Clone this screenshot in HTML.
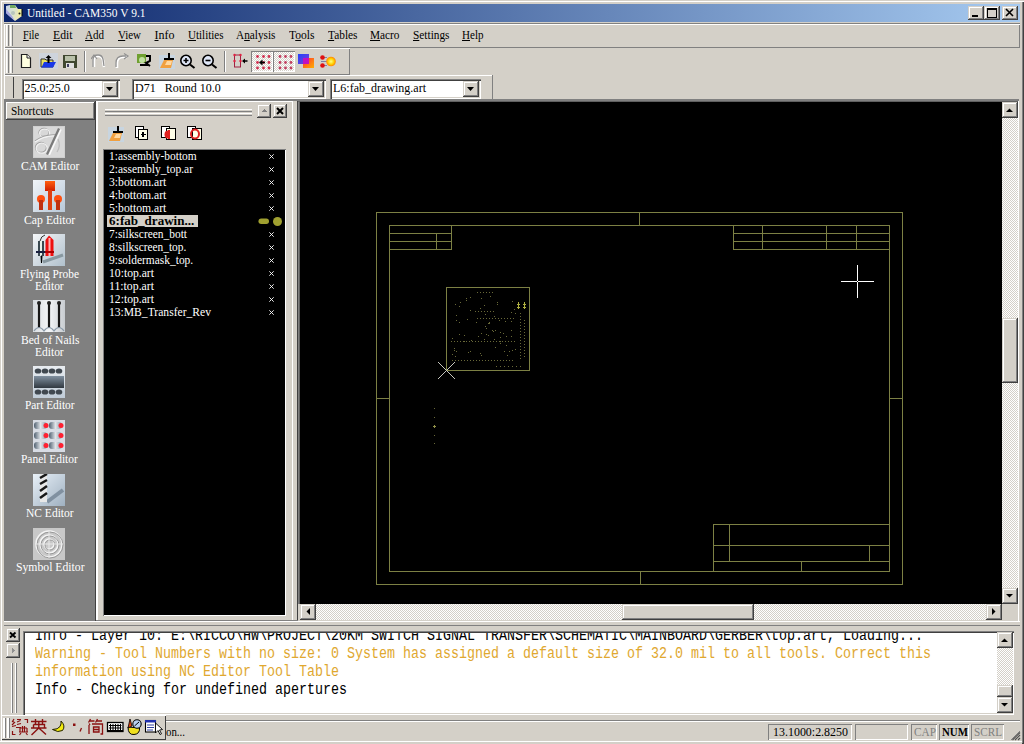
<!DOCTYPE html>
<html><head><meta charset="utf-8">
<style>
*{margin:0;padding:0;box-sizing:border-box}
html,body{width:1024px;height:744px;overflow:hidden;background:#d4d0c8;font-family:"Liberation Serif",serif;font-size:12px;color:#000;position:relative}
.a{position:absolute}
.t{position:absolute;white-space:nowrap;line-height:1}
.chk{background-color:#d4d0c8;background-image:linear-gradient(45deg,#fff 25%,transparent 25%,transparent 75%,#fff 75%),linear-gradient(45deg,#fff 25%,transparent 25%,transparent 75%,#fff 75%);background-size:2px 2px;background-position:0 0,1px 1px}
</style></head><body>

<div class="a" style="left:0px;top:0px;width:1024px;height:744px;background:#d4d0c8;box-shadow:inset 1px 1px #d4d0c8,inset 2px 2px #ffffff,inset -1px -1px #404040,inset -2px -2px #808080;"></div>
<div class="a" style="left:4px;top:4px;width:1016px;height:18px;background:linear-gradient(to right,#0a246a,#a6caf0);"></div>
<svg class="a" style="left:4px;top:4px;shape-rendering:auto" width="20" height="18" viewBox="0 0 20 18" shape-rendering="crispEdges"><defs><linearGradient id="ti" x1="0" y1="0" x2="1" y2="0.3"><stop offset="0" stop-color="#c8d4e8"/><stop offset="0.5" stop-color="#d8e4d0"/><stop offset="1" stop-color="#f0e8b0"/></linearGradient></defs><polygon points="2,2 6,1 11,1 14,5 18,5 18,12 11,17 2,9" fill="url(#ti)"/><polygon points="6,1 11,1 12,4 6,4" fill="#70a860"/><polygon points="2,5 8,12 11,17 5,12 2,9" fill="#a8a8e0"/><rect x="14" y="5" width="4" height="7" fill="#f0f0a0"/><circle cx="15.5" cy="9.5" r="1" fill="#202020"/><path d="M18 5 V12" stroke="#000" stroke-width="1"/><circle cx="9" cy="9" r="2" fill="#a0b0b0" opacity="0.6"/></svg>
<div class="t" style="left:27px;top:6.95px;font-family:'Liberation Serif';font-size:12px;color:#fff;font-weight:normal;transform:scale(0.9564,1.0);transform-origin:0 0;">Untitled - CAM350 V 9.1</div>
<div class="a" style="left:968px;top:6px;width:16px;height:14px;background:#d4d0c8;box-shadow:inset -1px -1px #404040,inset 1px 1px #d4d0c8,inset -2px -2px #808080,inset 2px 2px #ffffff;"></div>
<div class="a" style="left:984px;top:6px;width:16px;height:14px;background:#d4d0c8;box-shadow:inset -1px -1px #404040,inset 1px 1px #d4d0c8,inset -2px -2px #808080,inset 2px 2px #ffffff;"></div>
<div class="a" style="left:1002px;top:6px;width:16px;height:14px;background:#d4d0c8;box-shadow:inset -1px -1px #404040,inset 1px 1px #d4d0c8,inset -2px -2px #808080,inset 2px 2px #ffffff;"></div>
<svg class="a" style="left:968px;top:6px;" width="16" height="14" viewBox="0 0 16 14" shape-rendering="crispEdges"><rect x="4" y="9" width="6" height="2" fill="#000"/></svg>
<svg class="a" style="left:984px;top:6px;" width="16" height="14" viewBox="0 0 16 14" shape-rendering="crispEdges"><rect x="3" y="2" width="9" height="9" fill="none" stroke="#000" stroke-width="1"/><rect x="3" y="2" width="9" height="2" fill="#000"/></svg>
<svg class="a" style="left:1002px;top:6px;shape-rendering:auto" width="16" height="14" viewBox="0 0 16 14" shape-rendering="crispEdges"><path d="M4 3 L11 10 M11 3 L4 10" stroke="#000" stroke-width="1.6" fill="none"/></svg>
<div class="a" style="left:4px;top:23px;width:1016px;height:1px;background:#808080;"></div>
<div class="a" style="left:4px;top:24px;width:1016px;height:24px;background:#d4d0c8;box-shadow:inset 1px 1px #ffffff,inset -1px -1px #808080;"></div>
<div class="a" style="left:6px;top:25px;width:1px;height:21px;background:#ffffff;"></div>
<div class="a" style="left:8px;top:25px;width:1px;height:21px;background:#808080;"></div>
<div class="a" style="left:7px;top:25px;width:1px;height:21px;background:#e8e6e0;"></div>
<div class="a" style="left:10px;top:25px;width:1px;height:21px;background:#ffffff;"></div>
<div class="a" style="left:12px;top:25px;width:1px;height:21px;background:#808080;"></div>
<div class="a" style="left:11px;top:25px;width:1px;height:21px;background:#e8e6e0;"></div>
<div class="t" style="left:23px;top:28.95px;font-family:'Liberation Serif';font-size:12px;color:#000;font-weight:normal;transform:scale(0.8562,1.0);transform-origin:0 0;"><span style="text-decoration:underline;text-underline-offset:1px">F</span>ile</div>
<div class="t" style="left:53px;top:28.95px;font-family:'Liberation Serif';font-size:12px;color:#000;font-weight:normal;transform:scale(0.9742,1.0);transform-origin:0 0;"><span style="text-decoration:underline;text-underline-offset:1px">E</span>dit</div>
<div class="t" style="left:85px;top:28.95px;font-family:'Liberation Serif';font-size:12px;color:#000;font-weight:normal;transform:scale(0.9191,1.0);transform-origin:0 0;"><span style="text-decoration:underline;text-underline-offset:1px">A</span>dd</div>
<div class="t" style="left:118px;top:28.95px;font-family:'Liberation Serif';font-size:12px;color:#000;font-weight:normal;transform:scale(0.9098,1.0);transform-origin:0 0;"><span style="text-decoration:underline;text-underline-offset:1px">V</span>iew</div>
<div class="t" style="left:154.5px;top:28.95px;font-family:'Liberation Serif';font-size:12px;color:#000;font-weight:normal;"><span style="text-decoration:underline;text-underline-offset:1px">I</span>nfo</div>
<div class="t" style="left:187.5px;top:28.95px;font-family:'Liberation Serif';font-size:12px;color:#000;font-weight:normal;transform:scale(0.9180,1.0);transform-origin:0 0;"><span style="text-decoration:underline;text-underline-offset:1px">U</span>tilities</div>
<div class="t" style="left:236px;top:28.95px;font-family:'Liberation Serif';font-size:12px;color:#000;font-weight:normal;transform:scale(0.9401,1.0);transform-origin:0 0;">A<span style="text-decoration:underline;text-underline-offset:1px">n</span>alysis</div>
<div class="t" style="left:288.5px;top:28.95px;font-family:'Liberation Serif';font-size:12px;color:#000;font-weight:normal;transform:scale(0.9617,1.0);transform-origin:0 0;">T<span style="text-decoration:underline;text-underline-offset:1px">o</span>ols</div>
<div class="t" style="left:327.5px;top:28.95px;font-family:'Liberation Serif';font-size:12px;color:#000;font-weight:normal;transform:scale(0.9468,1.0);transform-origin:0 0;"><span style="text-decoration:underline;text-underline-offset:1px">T</span>ables</div>
<div class="t" style="left:370px;top:28.95px;font-family:'Liberation Serif';font-size:12px;color:#000;font-weight:normal;transform:scale(0.9416,1.0);transform-origin:0 0;"><span style="text-decoration:underline;text-underline-offset:1px">M</span>acro</div>
<div class="t" style="left:412.5px;top:28.95px;font-family:'Liberation Serif';font-size:12px;color:#000;font-weight:normal;transform:scale(0.9435,1.0);transform-origin:0 0;"><span style="text-decoration:underline;text-underline-offset:1px">S</span>ettings</div>
<div class="t" style="left:461.5px;top:28.95px;font-family:'Liberation Serif';font-size:12px;color:#000;font-weight:normal;transform:scale(0.9210,1.0);transform-origin:0 0;"><span style="text-decoration:underline;text-underline-offset:1px">H</span>elp</div>
<div class="a" style="left:4px;top:48px;width:346px;height:27px;background:#d4d0c8;box-shadow:inset 1px 1px #ffffff,inset -1px -1px #808080;"></div>
<div class="a" style="left:6px;top:50px;width:1px;height:23px;background:#ffffff;"></div>
<div class="a" style="left:8px;top:50px;width:1px;height:23px;background:#808080;"></div>
<div class="a" style="left:7px;top:50px;width:1px;height:23px;background:#e8e6e0;"></div>
<div class="a" style="left:10px;top:50px;width:1px;height:23px;background:#ffffff;"></div>
<div class="a" style="left:12px;top:50px;width:1px;height:23px;background:#808080;"></div>
<div class="a" style="left:11px;top:50px;width:1px;height:23px;background:#e8e6e0;"></div>
<!--TOOLBAR-->
<svg class="a" style="left:20px;top:53px;shape-rendering:auto" width="12" height="16" viewBox="0 0 12 16" shape-rendering="crispEdges"><path d="M1.5 1.5 H7 L10.5 5 V14.5 H1.5 Z" fill="#ffffe0" stroke="#202020" stroke-width="1.2"/><path d="M7 1.5 V5 H10.5" fill="#fff" stroke="#202020" stroke-width="1"/></svg>
<svg class="a" style="left:39px;top:53px;shape-rendering:auto" width="19" height="16" viewBox="0 0 19 16" shape-rendering="crispEdges"><rect x="0" y="0" width="19" height="16" fill="#c8d8f0" opacity="0.5"/><path d="M2 6 H6 L7 7 H14 V14 H2 Z" fill="#e8e060" stroke="#303030" stroke-width="1"/><path d="M2.5 14.5 L5 9 H17 L14 14.5 Z" fill="#1838e8"/><path d="M9.5 2 L6.5 5 H8.5 V10 H10.5 V5 H12.5 Z" fill="#000"/></svg>
<svg class="a" style="left:62px;top:54px;" width="16" height="15" viewBox="0 0 16 15" shape-rendering="crispEdges"><rect x="1" y="1" width="14" height="13" fill="#404830"/><rect x="3" y="2" width="10" height="5" fill="#b8c0a8"/><rect x="4" y="9" width="8" height="5" fill="#e0e0e0"/><rect x="5" y="10" width="2" height="3" fill="#404060"/></svg>
<div class="a" style="left:84px;top:51px;width:1px;height:21px;background:#808080;"></div>
<div class="a" style="left:85px;top:51px;width:1px;height:21px;background:#ffffff;"></div>
<svg class="a" style="left:91px;top:53px;shape-rendering:auto" width="17" height="16" viewBox="0 0 17 16" shape-rendering="crispEdges"><path d="M3 14 V7 Q3 3 7 3 Q11 3 12 7 L13 14" fill="none" stroke="#fff" stroke-width="2.5"/><path d="M2 14 V7 Q2 2 7 2 Q11 2 12 6 L13 13" fill="none" stroke="#909090" stroke-width="1.3"/><path d="M0 6 L3 2 L6 6" fill="none" stroke="#909090" stroke-width="1.2"/></svg>
<svg class="a" style="left:113px;top:53px;shape-rendering:auto" width="17" height="16" viewBox="0 0 17 16" shape-rendering="crispEdges"><path d="M4 15 V10 Q4 4 10 4 H14" fill="none" stroke="#fff" stroke-width="2.5"/><path d="M3 14 V10 Q3 3 10 3 H13" fill="none" stroke="#909090" stroke-width="1.3"/><path d="M11 0.5 L15 3 L11 6" fill="none" stroke="#909090" stroke-width="1.2"/></svg>
<svg class="a" style="left:136px;top:54px;shape-rendering:auto" width="16" height="14" viewBox="0 0 16 14" shape-rendering="crispEdges"><rect x="1" y="0" width="9" height="9" fill="#70a030"/><circle cx="6" cy="6" r="3" fill="#c0e0a0"/><path d="M4 11 H12 M10 2 H14 V7 L10 9 L14 12" fill="none" stroke="#000" stroke-width="2"/></svg>
<svg class="a" style="left:159px;top:53px;shape-rendering:auto" width="16" height="16" viewBox="0 0 16 16" shape-rendering="crispEdges"><rect x="0" y="2" width="16" height="14" fill="#c0d8f0" opacity="0.6"/><rect x="9" y="0" width="2" height="6" fill="#000"/><rect x="5" y="5" width="10" height="2" fill="#000"/><path d="M5 7 H14 L12 15 H1 Z" fill="#f0a040"/><path d="M8 8 H13 L12 12 H6 Z" fill="#ffd8a0"/></svg>
<svg class="a" style="left:179px;top:53px;shape-rendering:auto" width="18" height="16" viewBox="0 0 18 16" shape-rendering="crispEdges"><circle cx="7" cy="7.5" r="5.2" fill="#e0e8f8" stroke="#000" stroke-width="1.6"/><path d="M4.5 7.5 H9.5 M7 5 V10" stroke="#000" stroke-width="1.6"/><path d="M11 11.5 L15.5 15" stroke="#000" stroke-width="2"/></svg>
<svg class="a" style="left:201px;top:53px;shape-rendering:auto" width="18" height="16" viewBox="0 0 18 16" shape-rendering="crispEdges"><circle cx="7" cy="7.5" r="5.2" fill="#e0e8f8" stroke="#000" stroke-width="1.6"/><path d="M4.5 7.5 H9.5" stroke="#000" stroke-width="1.6"/><path d="M11 11.5 L15.5 15" stroke="#000" stroke-width="2"/></svg>
<div class="a" style="left:224px;top:51px;width:1px;height:21px;background:#808080;"></div>
<div class="a" style="left:225px;top:51px;width:1px;height:21px;background:#ffffff;"></div>
<svg class="a" style="left:232px;top:53px;shape-rendering:auto" width="17" height="16" viewBox="0 0 17 16" shape-rendering="crispEdges"><rect x="2.5" y="2" width="6" height="12" fill="none" stroke="#a02040" stroke-width="1"/><circle cx="2.5" cy="2" r="1.2" fill="#e02040"/><circle cx="8.5" cy="2" r="1.2" fill="#e02040"/><circle cx="2.5" cy="8" r="1.2" fill="#e02040"/><circle cx="8.5" cy="8" r="1.2" fill="#e02040"/><path d="M10 8 L13 5.5 V10.5 Z M12 7.3 H15.5 V8.7 H12 Z" fill="#000"/></svg>
<div class="a" style="left:251px;top:51px;width:22px;height:21px;box-shadow:inset 1px 1px #808080,inset -1px -1px #ffffff;"></div>
<div class="a chk" style="left:252px;top:52px;width:20px;height:19px"></div>
<div class="a" style="left:273px;top:51px;width:22px;height:21px;box-shadow:inset 1px 1px #808080,inset -1px -1px #ffffff;"></div>
<div class="a chk" style="left:274px;top:52px;width:20px;height:19px"></div>
<svg class="a" style="left:251px;top:51px;shape-rendering:auto" width="22" height="21" viewBox="0 0 22 21" shape-rendering="crispEdges"><circle cx="6.5" cy="5.5" r="1.4" fill="#d03050"/><circle cx="6.5" cy="11.5" r="1.4" fill="#d03050"/><circle cx="6.5" cy="17" r="1.4" fill="#d03050"/><circle cx="12.5" cy="5.5" r="1.4" fill="#d03050"/><circle cx="12.5" cy="11.5" r="1.4" fill="#d03050"/><circle cx="12.5" cy="17" r="1.4" fill="#d03050"/><circle cx="18" cy="5.5" r="1.4" fill="#d03050"/><circle cx="18" cy="11.5" r="1.4" fill="#d03050"/><circle cx="18" cy="17" r="1.4" fill="#d03050"/><path d="M8 11.5 L11.5 8.5 V14.5 Z M10.5 10.7 H14 V12.3 H10.5 Z" fill="#000"/></svg>
<svg class="a" style="left:273px;top:51px;shape-rendering:auto" width="22" height="21" viewBox="0 0 22 21" shape-rendering="crispEdges"><circle cx="7" cy="5.5" r="1.4" fill="#c04060"/><circle cx="7" cy="11.5" r="1.4" fill="#c04060"/><circle cx="7" cy="17" r="1.4" fill="#c04060"/><circle cx="12.5" cy="5.5" r="1.4" fill="#c04060"/><circle cx="12.5" cy="11.5" r="1.4" fill="#c04060"/><circle cx="12.5" cy="17" r="1.4" fill="#c04060"/><circle cx="18" cy="5.5" r="1.4" fill="#c04060"/><circle cx="18" cy="11.5" r="1.4" fill="#c04060"/><circle cx="18" cy="17" r="1.4" fill="#c04060"/></svg>
<svg class="a" style="left:298px;top:54px;shape-rendering:auto" width="17" height="15" viewBox="0 0 17 15" shape-rendering="crispEdges"><defs><linearGradient id="gb" x1="0" y1="0" x2="1" y2="1"><stop offset="0" stop-color="#2040ff"/><stop offset="1" stop-color="#8040d0"/></linearGradient><linearGradient id="go" x1="0" y1="0" x2="1" y2="1"><stop offset="0" stop-color="#ff3030"/><stop offset="1" stop-color="#ffb000"/></linearGradient></defs><rect x="0" y="0" width="11" height="10" fill="url(#gb)"/><rect x="5" y="4" width="11" height="10" fill="url(#go)"/><rect x="5" y="4" width="6" height="6" fill="#c010c0"/></svg>
<svg class="a" style="left:319px;top:53px;shape-rendering:auto" width="20" height="17" viewBox="0 0 20 17" shape-rendering="crispEdges"><defs><radialGradient id="gs"><stop offset="0" stop-color="#ffff80"/><stop offset="0.6" stop-color="#ffd000"/><stop offset="1" stop-color="#ff8000"/></radialGradient></defs><path d="M3 4.5 H8 M3 12.5 H8 M2 8.5 H8" stroke="#8080a0" stroke-width="1"/><circle cx="3.5" cy="4.5" r="2.3" fill="#e01010"/><circle cx="3.5" cy="12.5" r="2.3" fill="#e01010"/><circle cx="12" cy="8.5" r="4.8" fill="url(#gs)"/></svg>
<div class="a" style="left:4px;top:75px;width:489px;height:1px;background:#ffffff;"></div>
<div class="a" style="left:492px;top:75px;width:1px;height:24px;background:#808080;"></div>
<div class="a" style="left:4px;top:75px;width:1px;height:24px;background:#ffffff;"></div>
<div class="a" style="left:13px;top:77px;width:1px;height:21px;background:#404040;"></div>
<div class="a" style="left:22px;top:79px;width:98px;height:20px;background:#fff;box-shadow:inset 1px 1px #808080,inset 2px 2px #404040,inset -1px -1px #ffffff,inset -2px -2px #d4d0c8;"></div>
<div class="a" style="left:102px;top:81px;width:16px;height:16px;background:#d4d0c8;box-shadow:inset -1px -1px #404040,inset 1px 1px #d4d0c8,inset -2px -2px #808080,inset 2px 2px #ffffff;"></div>
<svg class="a" style="left:102px;top:81px;shape-rendering:auto" width="16" height="16" viewBox="0 0 16 16" shape-rendering="crispEdges"><polygon points="4,6 11,6 7.5,10" fill="#000"/></svg>
<div class="t" style="left:24.5px;top:81.95px;font-family:'Liberation Serif';font-size:12px;color:#000;font-weight:normal;">25.0:25.0</div>
<div class="a" style="left:132px;top:79px;width:194px;height:20px;background:#fff;box-shadow:inset 1px 1px #808080,inset 2px 2px #404040,inset -1px -1px #ffffff,inset -2px -2px #d4d0c8;"></div>
<div class="a" style="left:308px;top:81px;width:16px;height:16px;background:#d4d0c8;box-shadow:inset -1px -1px #404040,inset 1px 1px #d4d0c8,inset -2px -2px #808080,inset 2px 2px #ffffff;"></div>
<svg class="a" style="left:308px;top:81px;shape-rendering:auto" width="16" height="16" viewBox="0 0 16 16" shape-rendering="crispEdges"><polygon points="4,6 11,6 7.5,10" fill="#000"/></svg>
<div class="t" style="left:135px;top:81.95px;font-family:'Liberation Serif';font-size:12px;color:#000;font-weight:normal;">D71&nbsp;&nbsp; Round 10.0</div>
<div class="a" style="left:330px;top:79px;width:151px;height:20px;background:#fff;box-shadow:inset 1px 1px #808080,inset 2px 2px #404040,inset -1px -1px #ffffff,inset -2px -2px #d4d0c8;"></div>
<div class="a" style="left:463px;top:81px;width:16px;height:16px;background:#d4d0c8;box-shadow:inset -1px -1px #404040,inset 1px 1px #d4d0c8,inset -2px -2px #808080,inset 2px 2px #ffffff;"></div>
<svg class="a" style="left:463px;top:81px;shape-rendering:auto" width="16" height="16" viewBox="0 0 16 16" shape-rendering="crispEdges"><polygon points="4,6 11,6 7.5,10" fill="#000"/></svg>
<div class="t" style="left:333px;top:81.95px;font-family:'Liberation Serif';font-size:12px;color:#000;font-weight:normal;">L6:fab_drawing.art</div>
<div class="a" style="left:4px;top:99px;width:1015px;height:2px;background:#808080;"></div>
<div class="a" style="left:4px;top:99px;width:2px;height:522px;background:#808080;"></div>
<div class="a" style="left:4px;top:101px;width:92px;height:1px;background:#808080;"></div>
<div class="a" style="left:6px;top:120px;width:89px;height:501px;background:#808080;"></div>
<div class="a" style="left:95px;top:101px;width:1px;height:520px;background:#404040;"></div>
<div class="a" style="left:6px;top:102px;width:89px;height:18px;background:#d4d0c8;box-shadow:inset -1px -1px #404040,inset 1px 1px #ffffff,inset -2px -2px #808080;"></div>
<div class="t" style="left:11px;top:104.53px;font-family:'Liberation Serif';font-size:12.5px;color:#000;font-weight:normal;transform:scale(0.9019,1.0);transform-origin:0 0;">Shortcuts</div>
<!--SHORTCUTS-->
<svg class="a" style="left:33px;top:126px;shape-rendering:auto" width="32" height="32" viewBox="0 0 32 32" shape-rendering="crispEdges"><rect width="32" height="32" fill="#cfcfcf"/><rect x="1" y="1" width="30" height="30" fill="#d8d8d8"/><g fill="none" stroke-width="1.3"><ellipse cx="11" cy="6.5" rx="5" ry="4" stroke="#a0a0a0"/><ellipse cx="11.6" cy="7.2" rx="5" ry="4" stroke="#f0f0f0"/><path d="M2 15 Q12 8 23 9" stroke="#a0a0a0"/><path d="M2 16 Q12 9 23 10" stroke="#f2f2f2"/><ellipse cx="8" cy="21.5" rx="5.5" ry="5" stroke="#a0a0a0"/><ellipse cx="8.7" cy="22.2" rx="5.5" ry="5" stroke="#f0f0f0"/><path d="M25 13 Q28 20 24 26" stroke="#bdbdbd"/></g><path d="M26 2.5 L14 28.5" stroke="#7a7a7a" stroke-width="2.2"/><path d="M28 3.5 L16.3 29" stroke="#fafafa" stroke-width="1.5"/></svg>
<svg class="a" style="left:33px;top:180px;shape-rendering:auto" width="32" height="32" viewBox="0 0 32 32" shape-rendering="crispEdges"><defs><linearGradient id="bg2" x1="0" y1="0" x2="1" y2="1"><stop offset="0" stop-color="#f0f4f8"/><stop offset="1" stop-color="#b8c8d8"/></linearGradient><linearGradient id="og" x1="0" y1="0" x2="0" y2="1"><stop offset="0" stop-color="#ff6010"/><stop offset="1" stop-color="#d02000"/></linearGradient></defs><rect width="32" height="32" fill="url(#bg2)"/><rect x="12" y="1" width="10" height="10" fill="url(#og)"/><rect x="15" y="10" width="4" height="20" fill="#e04010"/><circle cx="8" cy="19" r="4" fill="#ff5010"/><rect x="6" y="20" width="4" height="10" fill="#c03010"/><circle cx="25" cy="19" r="4" fill="#ff5010"/><rect x="23" y="20" width="4" height="10" fill="#c03010"/></svg>
<svg class="a" style="left:33px;top:234px;shape-rendering:auto" width="32" height="32" viewBox="0 0 32 32" shape-rendering="crispEdges"><defs><linearGradient id="bg3" x1="0" y1="0" x2="1" y2="1"><stop offset="0" stop-color="#f4f6f8"/><stop offset="1" stop-color="#b0c0cc"/></linearGradient></defs><rect width="32" height="32" fill="url(#bg3)"/><path d="M10 28 L30 21" stroke="#8898a0" stroke-width="3"/><path d="M7 7 Q8 2 12 1" stroke="#303030" stroke-width="1" fill="none"/><rect x="5" y="7" width="6" height="15" fill="#3a4850"/><rect x="7" y="7" width="2" height="15" fill="#e8f0e8"/><rect x="3" y="17" width="9" height="2" fill="#1a2040"/><path d="M8 22 L9 22 L8.5 29 Z" fill="#000" stroke="#000" stroke-width="1"/><path d="M16 1.5 L20.5 6 V22 H12.5 V6 Z" fill="#ee1010"/><rect x="15.5" y="4" width="2" height="18" fill="#ffb0b0"/><rect x="12" y="17" width="9" height="2" fill="#b00000"/></svg>
<svg class="a" style="left:33px;top:300px;shape-rendering:auto" width="32" height="32" viewBox="0 0 32 32" shape-rendering="crispEdges"><defs><linearGradient id="bg4" x1="0" y1="0" x2="1" y2="0"><stop offset="0" stop-color="#d8dce0"/><stop offset="0.5" stop-color="#f4f6f8"/><stop offset="1" stop-color="#c8ccd0"/></linearGradient></defs><rect width="32" height="32" fill="url(#bg4)"/><path d="M6 3 V28 M16 3 V28 M26 3 V28" stroke="#181818" stroke-width="2.2"/><circle cx="6" cy="3" r="2" fill="#202020"/><circle cx="16" cy="3" r="2" fill="#202020"/><circle cx="26" cy="3" r="2" fill="#202020"/><path d="M1 31 Q6 24 11 31 Q16 24 21 31 Q26 24 31 31" fill="none" stroke="#8898a8" stroke-width="1.2"/></svg>
<svg class="a" style="left:33px;top:366px;shape-rendering:auto" width="32" height="32" viewBox="0 0 32 32" shape-rendering="crispEdges"><defs><linearGradient id="bg5" x1="0" y1="0" x2="0" y2="1"><stop offset="0" stop-color="#e8ecf0"/><stop offset="1" stop-color="#c0ccd8"/></linearGradient><linearGradient id="pb" x1="0" y1="0" x2="0" y2="1"><stop offset="0" stop-color="#8090a0"/><stop offset="1" stop-color="#303840"/></linearGradient></defs><rect width="32" height="32" fill="url(#bg5)"/><rect x="1" y="10" width="30" height="12" fill="url(#pb)"/><ellipse cx="5" cy="5" rx="3.3" ry="2.6" fill="#404850"/><ellipse cx="5" cy="26" rx="3.3" ry="2.6" fill="#404850"/><ellipse cx="12" cy="5" rx="3.3" ry="2.6" fill="#404850"/><ellipse cx="12" cy="26" rx="3.3" ry="2.6" fill="#404850"/><ellipse cx="19" cy="5" rx="3.3" ry="2.6" fill="#404850"/><ellipse cx="19" cy="26" rx="3.3" ry="2.6" fill="#404850"/><ellipse cx="26" cy="5" rx="3.3" ry="2.6" fill="#404850"/><ellipse cx="26" cy="26" rx="3.3" ry="2.6" fill="#404850"/></svg>
<svg class="a" style="left:33px;top:420px;shape-rendering:auto" width="32" height="32" viewBox="0 0 32 32" shape-rendering="crispEdges"><defs><linearGradient id="bg6" x1="0" y1="0" x2="1" y2="0"><stop offset="0" stop-color="#506070"/><stop offset="0.5" stop-color="#e0e4e8"/><stop offset="1" stop-color="#8898a8"/></linearGradient></defs><rect width="32" height="32" fill="#d8dce4"/><rect x="1" y="2" width="13" height="7" rx="3" fill="url(#bg6)"/><circle cx="13" cy="5.5" r="2.5" fill="#ff2030"/><rect x="1" y="12" width="13" height="7" rx="3" fill="url(#bg6)"/><circle cx="13" cy="15.5" r="2.5" fill="#ff2030"/><rect x="1" y="22" width="13" height="7" rx="3" fill="url(#bg6)"/><circle cx="13" cy="25.5" r="2.5" fill="#ff2030"/><rect x="16" y="2" width="13" height="7" rx="3" fill="url(#bg6)"/><circle cx="28" cy="5.5" r="2.5" fill="#ff2030"/><rect x="16" y="12" width="13" height="7" rx="3" fill="url(#bg6)"/><circle cx="28" cy="15.5" r="2.5" fill="#ff2030"/><rect x="16" y="22" width="13" height="7" rx="3" fill="url(#bg6)"/><circle cx="28" cy="25.5" r="2.5" fill="#ff2030"/></svg>
<svg class="a" style="left:33px;top:474px;shape-rendering:auto" width="32" height="32" viewBox="0 0 32 32" shape-rendering="crispEdges"><defs><linearGradient id="bg7" x1="0" y1="0" x2="1" y2="1"><stop offset="0" stop-color="#e8f0f8"/><stop offset="1" stop-color="#9fb0c0"/></linearGradient></defs><rect width="32" height="32" fill="url(#bg7)"/><path d="M14 28 L30 16" stroke="#8090a0" stroke-width="4"/><rect x="7" y="0" width="7" height="28" fill="#e8e8e8"/><path d="M7 4 L14 0 M7 10 L14 6 M7 17 L14 12 M7 24 L14 19" stroke="#181818" stroke-width="2.5"/></svg>
<svg class="a" style="left:33px;top:528px;shape-rendering:auto" width="32" height="32" viewBox="0 0 32 32" shape-rendering="crispEdges"><rect width="32" height="32" fill="#c8c8c8"/><circle cx="16" cy="16" r="13" fill="none" stroke="#f4f4f4" stroke-width="1.5"/><circle cx="16" cy="16" r="9" fill="none" stroke="#f4f4f4" stroke-width="1.5"/><circle cx="16" cy="16" r="5" fill="none" stroke="#f4f4f4" stroke-width="1.5"/><circle cx="17" cy="17" r="13" fill="none" stroke="#989898" stroke-width="1"/><circle cx="17" cy="17" r="9" fill="none" stroke="#989898" stroke-width="1"/><circle cx="17" cy="17" r="5" fill="none" stroke="#989898" stroke-width="1"/><path d="M16 2 V30 M2 16 H30" stroke="#e8e8e8" stroke-width="1"/></svg>
<div class="t" style="left:20.6px;top:158.69px;font-family:'Liberation Serif';font-size:13.5px;color:#fff;font-weight:normal;transform:scale(0.8587,1.0);transform-origin:0 0;">CAM Editor</div>
<div class="t" style="left:24.1px;top:212.69px;font-family:'Liberation Serif';font-size:13.5px;color:#fff;font-weight:normal;transform:scale(0.8713,1.0);transform-origin:0 0;">Cap Editor</div>
<div class="t" style="left:20.3px;top:266.69px;font-family:'Liberation Serif';font-size:13.5px;color:#fff;font-weight:normal;transform:scale(0.8412,1.0);transform-origin:0 0;">Flying Probe</div>
<div class="t" style="left:35.4px;top:278.69px;font-family:'Liberation Serif';font-size:13.5px;color:#fff;font-weight:normal;transform:scale(0.8504,1.0);transform-origin:0 0;">Editor</div>
<div class="t" style="left:20.5px;top:332.69px;font-family:'Liberation Serif';font-size:13.5px;color:#fff;font-weight:normal;transform:scale(0.8571,1.0);transform-origin:0 0;">Bed of Nails</div>
<div class="t" style="left:35.4px;top:344.69px;font-family:'Liberation Serif';font-size:13.5px;color:#fff;font-weight:normal;transform:scale(0.8504,1.0);transform-origin:0 0;">Editor</div>
<div class="t" style="left:25.0px;top:397.69px;font-family:'Liberation Serif';font-size:13.5px;color:#fff;font-weight:normal;transform:scale(0.8425,1.0);transform-origin:0 0;">Part Editor</div>
<div class="t" style="left:21.4px;top:451.69px;font-family:'Liberation Serif';font-size:13.5px;color:#fff;font-weight:normal;transform:scale(0.8462,1.0);transform-origin:0 0;">Panel Editor</div>
<div class="t" style="left:26.0px;top:505.69px;font-family:'Liberation Serif';font-size:13.5px;color:#fff;font-weight:normal;transform:scale(0.8519,1.0);transform-origin:0 0;">NC Editor</div>
<div class="t" style="left:15.5px;top:559.69px;font-family:'Liberation Serif';font-size:13.5px;color:#fff;font-weight:normal;transform:scale(0.8668,1.0);transform-origin:0 0;">Symbol Editor</div>
<div class="a" style="left:96px;top:101px;width:2px;height:520px;background:#ffffff;"></div>
<div class="a" style="left:98px;top:101px;width:194px;height:1px;background:#ffffff;"></div>
<div class="a" style="left:96px;top:620px;width:197px;height:1px;background:#808080;"></div>
<div class="a" style="left:292px;top:101px;width:1px;height:520px;background:#ffffff;"></div>
<div class="a" style="left:105px;top:109px;width:147px;height:1px;background:#ffffff;"></div>
<div class="a" style="left:105px;top:111px;width:147px;height:1px;background:#808080;"></div>
<div class="a" style="left:105px;top:113px;width:147px;height:1px;background:#ffffff;"></div>
<div class="a" style="left:105px;top:115px;width:147px;height:1px;background:#808080;"></div>
<div class="a" style="left:257px;top:104px;width:14px;height:14px;background:#d4d0c8;box-shadow:inset -1px -1px #404040,inset 1px 1px #d4d0c8,inset -2px -2px #808080,inset 2px 2px #ffffff;"></div>
<svg class="a" style="left:257px;top:104px;" width="14" height="14" viewBox="0 0 14 14" shape-rendering="crispEdges"><polygon points="4,8 10,8 7,5" fill="#808080"/></svg>
<div class="a" style="left:273px;top:104px;width:14px;height:14px;background:#d4d0c8;box-shadow:inset -1px -1px #404040,inset 1px 1px #d4d0c8,inset -2px -2px #808080,inset 2px 2px #ffffff;"></div>
<svg class="a" style="left:273px;top:104px;shape-rendering:auto" width="14" height="14" viewBox="0 0 14 14" shape-rendering="crispEdges"><path d="M4 4 L10 10 M10 4 L4 10" stroke="#000" stroke-width="2"/></svg>
<!--LAYERS-->
<svg class="a" style="left:108px;top:126px;shape-rendering:auto" width="16" height="16" viewBox="0 0 16 16" shape-rendering="crispEdges"><rect x="0" y="1" width="16" height="15" fill="#c0d8f0" opacity="0.6"/><rect x="9" y="0" width="2" height="6" fill="#000"/><rect x="5" y="5" width="10" height="2" fill="#000"/><path d="M5 7 H14 L12 15 H1 Z" fill="#f0a040"/><path d="M8 8 H13 L12 12 H6 Z" fill="#ffd8a0"/></svg>
<svg class="a" style="left:135px;top:126px;" width="15" height="15" viewBox="0 0 15 15" shape-rendering="crispEdges"><rect x="0.5" y="0.5" width="8" height="11" fill="#fff" stroke="#000"/><rect x="3.5" y="3.5" width="9" height="10" fill="#ffffe8" stroke="#000"/><path d="M5.5 8.5 H10.5 M8 6 V11" stroke="#000" stroke-width="1.5"/></svg>
<svg class="a" style="left:161px;top:126px;shape-rendering:auto" width="15" height="15" viewBox="0 0 15 15" shape-rendering="crispEdges"><rect x="0.5" y="0.5" width="8" height="11" fill="#fff" stroke="#000"/><rect x="5.5" y="2.5" width="9" height="11" fill="#ffffe8" stroke="#000"/><path d="M7 4.5 A3.5 4 0 0 0 7 12.5 Z" fill="#e02020"/><rect x="7" y="4" width="2" height="9" fill="#e02020"/></svg>
<svg class="a" style="left:187px;top:126px;shape-rendering:auto" width="15" height="15" viewBox="0 0 15 15" shape-rendering="crispEdges"><rect x="0.5" y="0.5" width="8" height="11" fill="#fff" stroke="#000"/><rect x="5.5" y="2.5" width="9" height="11" fill="#ffffe8" stroke="#000"/><ellipse cx="8" cy="8" rx="4" ry="4.5" fill="none" stroke="#e02020" stroke-width="2"/></svg>
<div class="a" style="left:103px;top:149px;width:183px;height:467px;background:#000;box-shadow:inset 1px 1px #808080,inset -1px -1px #ffffff;"></div>
<div class="t" style="left:109px;top:149.53px;font-family:'Liberation Serif';font-size:12.5px;color:#fff;font-weight:normal;transform:scale(0.9152,1.0);transform-origin:0 0;">1:assembly-bottom</div>
<svg class="a" style="left:269px;top:154px;shape-rendering:auto" width="5" height="5" viewBox="0 0 5 5" shape-rendering="crispEdges"><path d="M0.3 0.3 L4.7 4.7 M4.7 0.3 L0.3 4.7" stroke="#fff" stroke-width="0.9"/></svg>
<div class="t" style="left:109px;top:162.53px;font-family:'Liberation Serif';font-size:12.5px;color:#fff;font-weight:normal;transform:scale(0.9199,1.0);transform-origin:0 0;">2:assembly_top.ar</div>
<svg class="a" style="left:269px;top:167px;shape-rendering:auto" width="5" height="5" viewBox="0 0 5 5" shape-rendering="crispEdges"><path d="M0.3 0.3 L4.7 4.7 M4.7 0.3 L0.3 4.7" stroke="#fff" stroke-width="0.9"/></svg>
<div class="t" style="left:109px;top:175.53px;font-family:'Liberation Serif';font-size:12.5px;color:#fff;font-weight:normal;transform:scale(0.9324,1.0);transform-origin:0 0;">3:bottom.art</div>
<svg class="a" style="left:269px;top:180px;shape-rendering:auto" width="5" height="5" viewBox="0 0 5 5" shape-rendering="crispEdges"><path d="M0.3 0.3 L4.7 4.7 M4.7 0.3 L0.3 4.7" stroke="#fff" stroke-width="0.9"/></svg>
<div class="t" style="left:109px;top:188.53px;font-family:'Liberation Serif';font-size:12.5px;color:#fff;font-weight:normal;transform:scale(0.9324,1.0);transform-origin:0 0;">4:bottom.art</div>
<svg class="a" style="left:269px;top:193px;shape-rendering:auto" width="5" height="5" viewBox="0 0 5 5" shape-rendering="crispEdges"><path d="M0.3 0.3 L4.7 4.7 M4.7 0.3 L0.3 4.7" stroke="#fff" stroke-width="0.9"/></svg>
<div class="t" style="left:109px;top:201.53px;font-family:'Liberation Serif';font-size:12.5px;color:#fff;font-weight:normal;transform:scale(0.9324,1.0);transform-origin:0 0;">5:bottom.art</div>
<svg class="a" style="left:269px;top:206px;shape-rendering:auto" width="5" height="5" viewBox="0 0 5 5" shape-rendering="crispEdges"><path d="M0.3 0.3 L4.7 4.7 M4.7 0.3 L0.3 4.7" stroke="#fff" stroke-width="0.9"/></svg>
<div class="a" style="left:107px;top:215px;width:91px;height:12px;background:#d4d0c8;"></div>
<div class="t" style="left:109px;top:214.53px;font-family:'Liberation Serif';font-size:12.5px;color:#000;font-weight:bold;transform:scale(1.0452,1.0);transform-origin:0 0;">6:fab_drawin...</div>
<svg class="a" style="left:258px;top:217px;shape-rendering:auto" width="25" height="10" viewBox="0 0 25 10" shape-rendering="crispEdges"><rect x="0.5" y="1.5" width="10.5" height="5.5" rx="2.7" fill="#a0a030"/><circle cx="19.5" cy="4.5" r="4.5" fill="#a0a030"/></svg>
<div class="t" style="left:109px;top:227.53px;font-family:'Liberation Serif';font-size:12.5px;color:#fff;font-weight:normal;transform:scale(0.9133,1.0);transform-origin:0 0;">7:silkscreen_bott</div>
<svg class="a" style="left:269px;top:232px;shape-rendering:auto" width="5" height="5" viewBox="0 0 5 5" shape-rendering="crispEdges"><path d="M0.3 0.3 L4.7 4.7 M4.7 0.3 L0.3 4.7" stroke="#fff" stroke-width="0.9"/></svg>
<div class="t" style="left:109px;top:240.53px;font-family:'Liberation Serif';font-size:12.5px;color:#fff;font-weight:normal;transform:scale(0.9087,1.0);transform-origin:0 0;">8:silkscreen_top.</div>
<svg class="a" style="left:269px;top:245px;shape-rendering:auto" width="5" height="5" viewBox="0 0 5 5" shape-rendering="crispEdges"><path d="M0.3 0.3 L4.7 4.7 M4.7 0.3 L0.3 4.7" stroke="#fff" stroke-width="0.9"/></svg>
<div class="t" style="left:109px;top:253.53px;font-family:'Liberation Serif';font-size:12.5px;color:#fff;font-weight:normal;transform:scale(0.9151,1.0);transform-origin:0 0;">9:soldermask_top.</div>
<svg class="a" style="left:269px;top:258px;shape-rendering:auto" width="5" height="5" viewBox="0 0 5 5" shape-rendering="crispEdges"><path d="M0.3 0.3 L4.7 4.7 M4.7 0.3 L0.3 4.7" stroke="#fff" stroke-width="0.9"/></svg>
<div class="t" style="left:109px;top:266.53px;font-family:'Liberation Serif';font-size:12.5px;color:#fff;font-weight:normal;transform:scale(0.9323,1.0);transform-origin:0 0;">10:top.art</div>
<svg class="a" style="left:269px;top:271px;shape-rendering:auto" width="5" height="5" viewBox="0 0 5 5" shape-rendering="crispEdges"><path d="M0.3 0.3 L4.7 4.7 M4.7 0.3 L0.3 4.7" stroke="#fff" stroke-width="0.9"/></svg>
<div class="t" style="left:109px;top:279.53px;font-family:'Liberation Serif';font-size:12.5px;color:#fff;font-weight:normal;transform:scale(0.9415,1.0);transform-origin:0 0;">11:top.art</div>
<svg class="a" style="left:269px;top:284px;shape-rendering:auto" width="5" height="5" viewBox="0 0 5 5" shape-rendering="crispEdges"><path d="M0.3 0.3 L4.7 4.7 M4.7 0.3 L0.3 4.7" stroke="#fff" stroke-width="0.9"/></svg>
<div class="t" style="left:109px;top:292.53px;font-family:'Liberation Serif';font-size:12.5px;color:#fff;font-weight:normal;transform:scale(0.9323,1.0);transform-origin:0 0;">12:top.art</div>
<svg class="a" style="left:269px;top:297px;shape-rendering:auto" width="5" height="5" viewBox="0 0 5 5" shape-rendering="crispEdges"><path d="M0.3 0.3 L4.7 4.7 M4.7 0.3 L0.3 4.7" stroke="#fff" stroke-width="0.9"/></svg>
<div class="t" style="left:109px;top:305.53px;font-family:'Liberation Serif';font-size:12.5px;color:#fff;font-weight:normal;transform:scale(0.9275,1.0);transform-origin:0 0;">13:MB_Transfer_Rev</div>
<svg class="a" style="left:269px;top:310px;shape-rendering:auto" width="5" height="5" viewBox="0 0 5 5" shape-rendering="crispEdges"><path d="M0.3 0.3 L4.7 4.7 M4.7 0.3 L0.3 4.7" stroke="#fff" stroke-width="0.9"/></svg>
<div class="a" style="left:297px;top:101px;width:1px;height:520px;background:#404040;"></div>
<div class="a" style="left:298px;top:101px;width:1px;height:503px;background:#808080;"></div>
<div class="a" style="left:299px;top:101px;width:1px;height:503px;background:#606060;"></div>
<div class="a" style="left:298px;top:101px;width:721px;height:1px;background:#606060;"></div>
<div class="a" style="left:300px;top:102px;width:702px;height:502px;background:#000;"></div>
<!--CANVAS-->
<svg class="a" style="left:300px;top:101px;" width="702" height="503" viewBox="0 0 702 503" shape-rendering="crispEdges"><g transform="translate(-300,-101)"><path d="M376 212.5H903M376 584.5H903M376.5 212V585M902.5 212V585M389 225.5H890M389 571.5H890M389.5 225V572M889.5 225V572M639.5 212V226M640.5 571V585M376 398.5H390M889 398.5H903M389 233.5H452M389 241.5H452M389 249.5H452M451.5 225V250M436.5 233V250M733 233.5H890M733 241.5H890M733 249.5H890M733.5 225V250M762.5 225V250M826.5 225V250M856.5 225V250M713 524.5H890M713 545.5H890M713 561.5H890M713.5 524V572M729.5 524V562M869.5 545V562M801.5 561V572M446 287.5H530M446 370.5H530M446.5 287V371M529.5 287V371" stroke="#7c8044" stroke-width="1" fill="none"/><g fill="#686838"><rect x="477" y="292" width="1" height="1"/><rect x="480" y="292" width="1" height="1"/><rect x="483" y="292" width="1" height="1"/><rect x="486" y="292" width="1" height="1"/><rect x="489" y="292" width="1" height="1"/><rect x="492" y="292" width="1" height="1"/><rect x="451" y="341" width="1" height="1"/><rect x="454" y="341" width="1" height="1"/><rect x="457" y="341" width="1" height="1"/><rect x="460" y="341" width="1" height="1"/><rect x="463" y="341" width="1" height="1"/><rect x="466" y="341" width="1" height="1"/><rect x="469" y="341" width="1" height="1"/><rect x="472" y="341" width="1" height="1"/><rect x="475" y="341" width="1" height="1"/><rect x="478" y="341" width="1" height="1"/><rect x="481" y="341" width="1" height="1"/><rect x="484" y="341" width="1" height="1"/><rect x="487" y="341" width="1" height="1"/><rect x="490" y="341" width="1" height="1"/><rect x="493" y="341" width="1" height="1"/><rect x="496" y="341" width="1" height="1"/><rect x="499" y="341" width="1" height="1"/><rect x="502" y="341" width="1" height="1"/><rect x="505" y="341" width="1" height="1"/><rect x="508" y="341" width="1" height="1"/><rect x="511" y="341" width="1" height="1"/><rect x="514" y="341" width="1" height="1"/><rect x="452" y="360" width="1" height="1"/><rect x="455" y="360" width="1" height="1"/><rect x="458" y="360" width="1" height="1"/><rect x="461" y="360" width="1" height="1"/><rect x="464" y="360" width="1" height="1"/><rect x="467" y="360" width="1" height="1"/><rect x="470" y="360" width="1" height="1"/><rect x="473" y="360" width="1" height="1"/><rect x="476" y="360" width="1" height="1"/><rect x="479" y="360" width="1" height="1"/><rect x="482" y="360" width="1" height="1"/><rect x="485" y="360" width="1" height="1"/><rect x="488" y="360" width="1" height="1"/><rect x="491" y="360" width="1" height="1"/><rect x="494" y="360" width="1" height="1"/><rect x="497" y="360" width="1" height="1"/><rect x="500" y="360" width="1" height="1"/><rect x="503" y="360" width="1" height="1"/><rect x="506" y="360" width="1" height="1"/><rect x="509" y="360" width="1" height="1"/><rect x="512" y="360" width="1" height="1"/><rect x="496" y="366" width="1" height="1"/><rect x="500" y="366" width="1" height="1"/><rect x="504" y="366" width="1" height="1"/><rect x="508" y="366" width="1" height="1"/><rect x="512" y="366" width="1" height="1"/><rect x="516" y="366" width="1" height="1"/><rect x="520" y="366" width="1" height="1"/><rect x="477" y="318" width="1" height="1"/><rect x="480" y="318" width="1" height="1"/><rect x="483" y="318" width="1" height="1"/><rect x="486" y="318" width="1" height="1"/><rect x="489" y="318" width="1" height="1"/><rect x="492" y="318" width="1" height="1"/><rect x="495" y="318" width="1" height="1"/><rect x="498" y="318" width="1" height="1"/><rect x="501" y="318" width="1" height="1"/><rect x="504" y="318" width="1" height="1"/><rect x="507" y="318" width="1" height="1"/><rect x="510" y="318" width="1" height="1"/><rect x="513" y="318" width="1" height="1"/><rect x="475" y="311" width="1" height="1"/><rect x="478" y="311" width="1" height="1"/><rect x="481" y="311" width="1" height="1"/><rect x="484" y="311" width="1" height="1"/><rect x="487" y="311" width="1" height="1"/><rect x="490" y="311" width="1" height="1"/><rect x="493" y="311" width="1" height="1"/><rect x="520" y="313" width="1" height="1"/><rect x="520" y="316" width="1" height="1"/><rect x="520" y="319" width="1" height="1"/><rect x="520" y="322" width="1" height="1"/><rect x="520" y="325" width="1" height="1"/><rect x="520" y="328" width="1" height="1"/><rect x="520" y="331" width="1" height="1"/><rect x="520" y="334" width="1" height="1"/><rect x="520" y="337" width="1" height="1"/><rect x="520" y="340" width="1" height="1"/><rect x="520" y="343" width="1" height="1"/><rect x="520" y="346" width="1" height="1"/><rect x="520" y="349" width="1" height="1"/><rect x="520" y="352" width="1" height="1"/><rect x="520" y="355" width="1" height="1"/><rect x="520" y="358" width="1" height="1"/><rect x="524" y="320" width="1" height="1"/><rect x="524" y="323" width="1" height="1"/><rect x="524" y="326" width="1" height="1"/><rect x="524" y="329" width="1" height="1"/><rect x="524" y="332" width="1" height="1"/><rect x="524" y="335" width="1" height="1"/><rect x="524" y="338" width="1" height="1"/><rect x="524" y="341" width="1" height="1"/><rect x="524" y="344" width="1" height="1"/><rect x="524" y="347" width="1" height="1"/><rect x="524" y="350" width="1" height="1"/><rect x="524" y="353" width="1" height="1"/><rect x="524" y="356" width="1" height="1"/><rect x="481" y="333" width="1" height="1"/><rect x="467" y="319" width="1" height="1"/><rect x="511" y="336" width="1" height="1"/><rect x="459" y="334" width="1" height="1"/><rect x="452" y="354" width="1" height="1"/><rect x="511" y="312" width="1" height="1"/><rect x="480" y="308" width="1" height="1"/><rect x="511" y="330" width="1" height="1"/><rect x="511" y="321" width="1" height="1"/><rect x="470" y="310" width="1" height="1"/><rect x="470" y="351" width="1" height="1"/><rect x="500" y="343" width="1" height="1"/><rect x="452" y="338" width="1" height="1"/><rect x="459" y="306" width="1" height="1"/><rect x="456" y="315" width="1" height="1"/><rect x="454" y="348" width="1" height="1"/><rect x="485" y="326" width="1" height="1"/><rect x="500" y="341" width="1" height="1"/><rect x="505" y="321" width="1" height="1"/><rect x="507" y="355" width="1" height="1"/><rect x="468" y="352" width="1" height="1"/><rect x="497" y="302" width="1" height="1"/><rect x="455" y="304" width="1" height="1"/><rect x="514" y="309" width="1" height="1"/><rect x="484" y="339" width="1" height="1"/><rect x="506" y="345" width="1" height="1"/><rect x="489" y="322" width="1" height="1"/><rect x="515" y="349" width="1" height="1"/><rect x="500" y="332" width="1" height="1"/><rect x="495" y="330" width="1" height="1"/><rect x="503" y="333" width="1" height="1"/><rect x="480" y="353" width="1" height="1"/><rect x="494" y="339" width="1" height="1"/><rect x="454" y="350" width="1" height="1"/><rect x="486" y="334" width="1" height="1"/><rect x="471" y="340" width="1" height="1"/><rect x="492" y="330" width="1" height="1"/><rect x="464" y="341" width="1" height="1"/><rect x="478" y="336" width="1" height="1"/><rect x="485" y="314" width="1" height="1"/><rect x="466" y="300" width="1" height="1"/><rect x="512" y="350" width="1" height="1"/><rect x="512" y="301" width="1" height="1"/><rect x="495" y="347" width="1" height="1"/><rect x="459" y="322" width="1" height="1"/><rect x="470" y="297" width="1" height="1"/><rect x="488" y="323" width="1" height="1"/><rect x="504" y="351" width="1" height="1"/><rect x="466" y="298" width="1" height="1"/><rect x="456" y="320" width="1" height="1"/><rect x="493" y="331" width="1" height="1"/><rect x="486" y="328" width="1" height="1"/><rect x="481" y="298" width="1" height="1"/><rect x="490" y="296" width="1" height="1"/><rect x="460" y="302" width="1" height="1"/><rect x="455" y="356" width="1" height="1"/><rect x="476" y="322" width="1" height="1"/><rect x="488" y="335" width="1" height="1"/><rect x="484" y="305" width="1" height="1"/><rect x="456" y="351" width="1" height="1"/><rect x="494" y="316" width="1" height="1"/><rect x="497" y="304" width="1" height="1"/><rect x="499" y="320" width="1" height="1"/><rect x="509" y="351" width="1" height="1"/><rect x="500" y="337" width="1" height="1"/><rect x="464" y="335" width="1" height="1"/><rect x="515" y="313" width="1" height="1"/><rect x="506" y="336" width="1" height="1"/><rect x="481" y="355" width="1" height="1"/><rect x="489" y="323" width="1" height="1"/><rect x="434" y="408" width="1" height="1"/><rect x="434" y="417" width="1" height="1"/><rect x="434" y="435" width="1" height="1"/><rect x="434" y="443" width="1" height="1"/></g><path d="M433 426.5H436M434.5 425V428" stroke="#909048"/><path d="M517 304.5h3M518.5 302v7M517 307.5h3M523 304.5h3M524.5 302v7M523 307.5h3" stroke="#b0b040"/><path d="M841 281.5H874M857.5 265V298" stroke="#fff"/><rect x="857" y="281" width="1" height="1" fill="#000"/></g></svg>
<svg class="a" style="left:300px;top:101px;shape-rendering:auto" width="702" height="503" viewBox="0 0 702 503" shape-rendering="crispEdges"><g transform="translate(-300,-101)"><path d="M438 362L455 379M455 362L438 379" stroke="#c8c8c0" stroke-width="1"/></g></svg>
<div class="a chk" style="left:1002px;top:102px;width:16px;height:502px"></div>
<div class="a" style="left:1002px;top:102px;width:16px;height:16px;background:#d4d0c8;box-shadow:inset -1px -1px #404040,inset 1px 1px #d4d0c8,inset -2px -2px #808080,inset 2px 2px #ffffff;"></div>
<svg class="a" style="left:1002px;top:102px;shape-rendering:auto" width="16" height="16" viewBox="0 0 16 16" shape-rendering="crispEdges"><polygon points="4,10 11,10 7.5,6.5" fill="#000"/></svg>
<div class="a" style="left:1002px;top:318px;width:16px;height:65px;background:#d4d0c8;box-shadow:inset -1px -1px #404040,inset 1px 1px #d4d0c8,inset -2px -2px #808080,inset 2px 2px #ffffff;"></div>
<div class="a" style="left:1002px;top:588px;width:16px;height:16px;background:#d4d0c8;box-shadow:inset -1px -1px #404040,inset 1px 1px #d4d0c8,inset -2px -2px #808080,inset 2px 2px #ffffff;"></div>
<svg class="a" style="left:1002px;top:588px;shape-rendering:auto" width="16" height="16" viewBox="0 0 16 16" shape-rendering="crispEdges"><polygon points="4,6 11,6 7.5,9.5" fill="#000"/></svg>
<div class="a chk" style="left:300px;top:604px;width:702px;height:16px"></div>
<div class="a" style="left:300px;top:604px;width:16px;height:16px;background:#d4d0c8;box-shadow:inset -1px -1px #404040,inset 1px 1px #d4d0c8,inset -2px -2px #808080,inset 2px 2px #ffffff;"></div>
<svg class="a" style="left:300px;top:604px;shape-rendering:auto" width="16" height="16" viewBox="0 0 16 16" shape-rendering="crispEdges"><polygon points="10,4 10,11 6.5,7.5" fill="#000"/></svg>
<div class="a" style="left:622px;top:604px;width:132px;height:16px;background:#d4d0c8;box-shadow:inset -1px -1px #404040,inset 1px 1px #d4d0c8,inset -2px -2px #808080,inset 2px 2px #ffffff;"></div>
<div class="a" style="left:986px;top:604px;width:16px;height:16px;background:#d4d0c8;box-shadow:inset -1px -1px #404040,inset 1px 1px #d4d0c8,inset -2px -2px #808080,inset 2px 2px #ffffff;"></div>
<svg class="a" style="left:986px;top:604px;shape-rendering:auto" width="16" height="16" viewBox="0 0 16 16" shape-rendering="crispEdges"><polygon points="6,4 6,11 9.5,7.5" fill="#000"/></svg>
<div class="a" style="left:1002px;top:604px;width:17px;height:17px;background:#d4d0c8;"></div>
<div class="a" style="left:1018px;top:101px;width:1px;height:520px;background:#ffffff;"></div>
<div class="a" style="left:96px;top:620px;width:202px;height:1px;background:#808080;"></div>
<div class="a" style="left:4px;top:621px;width:1016px;height:1px;background:#ffffff;"></div>
<div class="a" style="left:4px;top:625px;width:1016px;height:1px;background:#808080;"></div>
<div class="a" style="left:6px;top:628px;width:14px;height:14px;background:#d4d0c8;box-shadow:inset -1px -1px #404040,inset 1px 1px #d4d0c8,inset -2px -2px #808080,inset 2px 2px #ffffff;"></div>
<svg class="a" style="left:6px;top:628px;shape-rendering:auto" width="14" height="14" viewBox="0 0 14 14" shape-rendering="crispEdges"><path d="M4 4.5 L9.5 9.5 M9.5 4.5 L4 9.5" stroke="#000" stroke-width="1.9"/></svg>
<div class="a" style="left:6px;top:643px;width:14px;height:15px;background:#d4d0c8;box-shadow:inset -1px -1px #404040,inset 1px 1px #d4d0c8,inset -2px -2px #808080,inset 2px 2px #ffffff;"></div>
<svg class="a" style="left:6px;top:643px;" width="14" height="15" viewBox="0 0 14 15" shape-rendering="crispEdges"><polygon points="6,5 6,10 8.5,7.5" fill="#909090"/></svg>
<div class="a" style="left:11px;top:663px;width:1px;height:50px;background:#ffffff;"></div>
<div class="a" style="left:12px;top:663px;width:1px;height:50px;background:#808080;"></div>
<div class="a" style="left:15px;top:663px;width:1px;height:50px;background:#ffffff;"></div>
<div class="a" style="left:16px;top:663px;width:1px;height:50px;background:#808080;"></div>
<div class="a" style="left:23px;top:631px;width:991px;height:84px;background:#fff;box-shadow:inset 1px 1px #808080,inset 2px 2px #404040,inset -1px -1px #ffffff,inset -2px -2px #d4d0c8;"></div>
<div class="a" style="left:25px;top:633px;width:972px;height:80px;overflow:hidden">
<div class="t" style="left:10px;top:-4.96px;font-family:'Liberation Mono';font-size:13.333px;color:#000;font-weight:normal;transform:scale(1.0002,1.17);transform-origin:0 0;">Info - Layer 10: E:&#92;RICCO&#92;HW&#92;PROJECT&#92;20KM SWITCH SIGNAL TRANSFER&#92;SCHEMATIC&#92;MAINBOARD&#92;GERBER&#92;top.art, Loading...</div>
<div class="t" style="left:10px;top:13.04px;font-family:'Liberation Mono';font-size:13.333px;color:#e0a830;font-weight:normal;transform:scale(1.0002,1.17);transform-origin:0 0;">Warning - Tool Numbers with no size: 0 System has assigned a default size of 32.0 mil to all tools. Correct this</div>
<div class="t" style="left:10px;top:31.04px;font-family:'Liberation Mono';font-size:13.333px;color:#e0a830;font-weight:normal;transform:scale(1.0002,1.17);transform-origin:0 0;">information using NC Editor Tool Table</div>
<div class="t" style="left:10px;top:49.04px;font-family:'Liberation Mono';font-size:13.333px;color:#000;font-weight:normal;transform:scale(1.0002,1.17);transform-origin:0 0;">Info - Checking for undefined apertures</div>
</div>
<div class="a chk" style="left:997px;top:632px;width:16px;height:81px"></div>
<div class="a" style="left:997px;top:632px;width:16px;height:16px;background:#d4d0c8;box-shadow:inset -1px -1px #404040,inset 1px 1px #d4d0c8,inset -2px -2px #808080,inset 2px 2px #ffffff;"></div>
<svg class="a" style="left:997px;top:632px;shape-rendering:auto" width="16" height="16" viewBox="0 0 16 16" shape-rendering="crispEdges"><polygon points="4,10 11,10 7.5,6.5" fill="#000"/></svg>
<div class="a" style="left:997px;top:685px;width:16px;height:12px;background:#d4d0c8;box-shadow:inset -1px -1px #404040,inset 1px 1px #d4d0c8,inset -2px -2px #808080,inset 2px 2px #ffffff;"></div>
<div class="a" style="left:997px;top:697px;width:16px;height:16px;background:#d4d0c8;box-shadow:inset -1px -1px #404040,inset 1px 1px #d4d0c8,inset -2px -2px #808080,inset 2px 2px #ffffff;"></div>
<svg class="a" style="left:997px;top:697px;shape-rendering:auto" width="16" height="16" viewBox="0 0 16 16" shape-rendering="crispEdges"><polygon points="4,6 11,6 7.5,9.5" fill="#000"/></svg>
<div class="a" style="left:4px;top:720px;width:1016px;height:1px;background:#808080;"></div>
<div class="a" style="left:4px;top:721px;width:1016px;height:1px;background:#ffffff;"></div>
<div class="a" style="left:0px;top:741px;width:1022px;height:1px;background:#ffffff;"></div>
<div class="a" style="left:0px;top:742px;width:1022px;height:2px;background:#d4d0c8;"></div>
<div class="t" style="left:166px;top:725.11px;font-family:'Liberation Serif';font-size:13px;color:#000;font-weight:normal;transform:scale(0.8352,1.0);transform-origin:0 0;">on...</div>
<div class="a" style="left:768px;top:724px;width:84px;height:16px;background:#d4d0c8;box-shadow:inset 1px 1px #808080,inset -1px -1px #ffffff;"></div>
<div class="a" style="left:855px;top:724px;width:53px;height:16px;background:#d4d0c8;box-shadow:inset 1px 1px #808080,inset -1px -1px #ffffff;"></div>
<div class="a" style="left:911px;top:724px;width:26px;height:16px;background:#d4d0c8;box-shadow:inset 1px 1px #808080,inset -1px -1px #ffffff;"></div>
<div class="a" style="left:939px;top:724px;width:30px;height:16px;background:#d4d0c8;box-shadow:inset 1px 1px #808080,inset -1px -1px #ffffff;"></div>
<div class="a" style="left:971px;top:724px;width:33px;height:16px;background:#d4d0c8;box-shadow:inset 1px 1px #808080,inset -1px -1px #ffffff;"></div>
<div class="t" style="left:773px;top:725.95px;font-family:'Liberation Serif';font-size:12px;color:#000;font-weight:normal;transform:scale(0.9954,1.0);transform-origin:0 0;">13.1000:2.8250</div>
<div class="t" style="left:913.5px;top:725.95px;font-family:'Liberation Serif';font-size:12px;color:#808080;font-weight:normal;transform:scale(0.9424,1.0);transform-origin:0 0;">CAP</div>
<div class="t" style="left:941.5px;top:725.95px;font-family:'Liberation Serif';font-size:12px;color:#000;font-weight:bold;transform:scale(0.9068,1.0);transform-origin:0 0;">NUM</div>
<div class="t" style="left:973.5px;top:725.95px;font-family:'Liberation Serif';font-size:12px;color:#808080;font-weight:normal;transform:scale(0.9328,1.0);transform-origin:0 0;">SCRL</div>
<svg class="a" style="left:1005px;top:725px;shape-rendering:auto" width="16" height="16" viewBox="0 0 16 16" shape-rendering="crispEdges"><g fill="#808080"><rect x="14" y="6" width="1" height="1"/><rect x="13" y="7" width="1" height="1"/><rect x="12" y="8" width="1" height="1"/><rect x="11" y="9" width="1" height="1"/><rect x="10" y="10" width="1" height="1"/><rect x="9" y="11" width="1" height="1"/><rect x="8" y="12" width="1" height="1"/><rect x="7" y="13" width="1" height="1"/><rect x="6" y="14" width="1" height="1"/></g><path d="M15 7.5 L7.5 15 M15 10 L10 15 M15 13 L13 15" stroke="#505050" stroke-width="1.2"/></svg>
<div class="a" style="left:1px;top:715px;width:165px;height:25px;background:#d4d0c8;box-shadow:inset 1px 1px #ffffff,inset -1px -1px #404040;"></div>
<div class="a" style="left:3px;top:718px;width:2px;height:20px;background:#ffffff;"></div>
<div class="a" style="left:5px;top:718px;width:1px;height:20px;background:#808080;"></div>
<div class="a" style="left:7px;top:718px;width:2px;height:20px;background:#ffffff;"></div>
<div class="a" style="left:9px;top:718px;width:1px;height:20px;background:#808080;"></div>
<svg class="a" style="left:0px;top:712px;shape-rendering:auto" width="170" height="32" viewBox="0 0 170 32" shape-rendering="crispEdges"><g transform="translate(0,-712)"><g fill="none" stroke="#8a1010" stroke-width="1.2"><path d="M14 719 L12.5 721.5 L14.5 722.5 L12 725 M12 726.5 L16 725.5 M17 719.5 L21 719.5 M17 722 L20.5 720.5 M17 724.5 L21 723.5 M16 727.5 H21"/><path d="M24.5 719.5 H27.5 V723 M12.5 731 V734.5 H15.5"/><path d="M20 728 H27 M20 728 V732 M27 728 V732 M19 732 H28 M22.5 726 V732 M24.5 726 V732 M21 733 L19.5 735 M26 733 L27.5 735"/><path d="M31 721.5 H46.5 M35.5 719 V724 M42.5 719 V724 M33.5 724.5 H44.5 V728 M33.5 724.5 V728 M31 728 H46.5 M38.8 722 V728 M38.8 728 L31.5 735 M38.8 728 L46 734.5" stroke-width="1.4"/></g><path d="M61 721 Q66 726 62.5 730.5 Q58 733 52.5 729.5 Q58 729.5 60 726.5 Q61.5 724 61 721 Z" fill="#f4ec10" stroke="#202000" stroke-width="1"/><rect x="73" y="723.5" width="2.5" height="2.5" fill="#8a1010"/><path d="M81.5 728 L80 731.5" stroke="#8a1010" stroke-width="1.3"/><g fill="none" stroke="#8a1010" stroke-width="1.3"><path d="M90.5 719 L88.5 722.5 M89.5 721 H94.5 M97.5 719 L95.5 722.5 M96.5 721 H102 M89 723.5 L90 725 M89 725 V734 M92 724 H102.5 V734 H100.5 M93.5 727 H99 V732 H93.5 Z M93.5 729.5 H99"/></g><rect x="107.5" y="722.5" width="15.5" height="9" fill="#fff" stroke="#000" stroke-width="1.3"/><path d="M109 725.5 H121.5 M109 728 H121.5 M110.5 724 V730 M113 724 V730 M115.5 724 V730 M118 724 V730 M120.5 724 V730" stroke="#000" stroke-width="1"/><rect x="108" y="730" width="15" height="2" fill="#000"/><path d="M128 727 Q128 735 134 734.5 Q140 734 139.5 728 Z" fill="#f0e020" stroke="#000" stroke-width="1"/><path d="M130 719 L132 726 L128 728 Z" fill="#e04010" stroke="#000" stroke-width="0.8"/><circle cx="137" cy="724" r="4.2" fill="#b8d0f0" stroke="#000" stroke-width="1.1"/><path d="M134.5 726 L139 722" stroke="#000" stroke-width="1"/><rect x="145.5" y="720.5" width="10" height="11.5" fill="#fff" stroke="#000" stroke-width="1.1"/><rect x="145" y="720" width="11" height="2.5" fill="#2030b0"/><path d="M147 725 H154 M147 727.5 H154 M147 730 H153" stroke="#3040a0" stroke-width="1"/><path d="M155.5 723 V733 L158 730.5 L160 734.5 L161.5 733.8 L159.5 730 L162.5 729.5 Z" fill="#fff" stroke="#000" stroke-width="0.9"/></g></svg>
</body></html>
